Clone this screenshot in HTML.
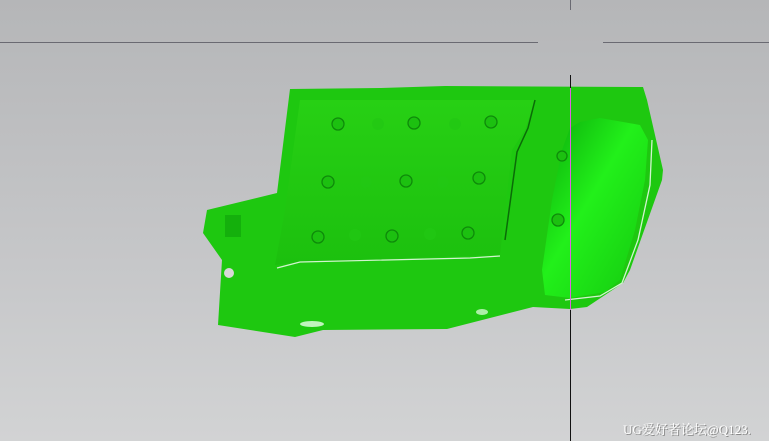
<!DOCTYPE html>
<html><head><meta charset="utf-8"><style>
html,body{margin:0;padding:0}
body{width:769px;height:441px;overflow:hidden;background:linear-gradient(#b5b6b8,#c6c7c9 60%,#d2d3d4);position:relative;font-family:"Liberation Serif","Noto Serif CJK SC",serif}
.t{position:absolute;left:623px;top:419px;font-size:13px;color:#fff;text-shadow:1px 1px 0 #888;white-space:nowrap}
</style></head><body>
<svg width="769" height="441" style="position:absolute;left:0;top:0">
<defs>
<linearGradient id="pk" x1="0" y1="0" x2="1" y2="1">
<stop offset="0" stop-color="#0aa80a"/><stop offset="0.45" stop-color="#22f01a"/><stop offset="1" stop-color="#14c80f"/>
</linearGradient>
<linearGradient id="pl" x1="0" y1="0" x2="0" y2="1">
<stop offset="0" stop-color="#27d014"/><stop offset="1" stop-color="#1cc00e"/>
</linearGradient>
</defs>
<line x1="0" y1="42.5" x2="538" y2="42.5" stroke="#6a6a72" stroke-width="1"/>
<line x1="603" y1="42.5" x2="769" y2="42.5" stroke="#6a6a72" stroke-width="1"/>
<line x1="570.5" y1="0" x2="570.5" y2="10" stroke="#6a6a72"/>
<polygon fill="#1ec810" points="290,89 380,88 445,86 643,87 647,100 663,170 662,180 630,270 623,283 587,307 570,309 533,307 447,329 323,330 295,337 218,325 222,260 203,233 207,210 277,193"/>
<polygon fill="url(#pl)" points="300,100 535,100 525,130 512,150 500,255 300,262 275,265 285,210"/>
<polyline fill="none" stroke="#fff" stroke-width="1.2" opacity=".8" points="277,268 300,262 470,258 500,256"/>
<polyline fill="none" stroke="#0b6b08" stroke-width="1.5" points="535,100 528,128 517,152 505,240"/>
<polygon fill="url(#pk)" points="570,128 580,122 600,118 640,125 648,140 645,180 635,230 620,280 605,292 570,298 545,295 542,270 552,200 562,150"/>
<polyline fill="none" stroke="#fff" stroke-width="1.3" opacity=".8" points="652,140 650,185 638,240 622,283 600,296 565,300"/>
<g fill="#1cc010" stroke="#0e8a0a" stroke-width="1.3">
<circle cx="338" cy="124" r="6"/><circle cx="414" cy="123" r="6"/><circle cx="491" cy="122" r="6"/>
<circle cx="328" cy="182" r="6"/><circle cx="406" cy="181" r="6"/><circle cx="479" cy="178" r="6"/>
<circle cx="318" cy="237" r="6"/><circle cx="392" cy="236" r="6"/><circle cx="468" cy="233" r="6"/>
<circle cx="562" cy="156" r="5"/><circle cx="558" cy="220" r="6"/>
</g>
<g fill="#22c814" opacity=".7">
<circle cx="378" cy="124" r="6"/><circle cx="455" cy="124" r="6"/>
<circle cx="366" cy="182" r="6"/><circle cx="443" cy="182" r="6"/>
<circle cx="355" cy="235" r="6"/><circle cx="430" cy="234" r="6"/>
</g>
<circle cx="229" cy="273" r="5" fill="#d8d8d8"/>
<rect x="225" y="215" width="16" height="22" fill="#14b00c"/>
<ellipse cx="312" cy="324" rx="12" ry="3" fill="#e8ffe8" opacity=".8"/>
<ellipse cx="482" cy="312" rx="6" ry="3" fill="#e8ffe8" opacity=".7"/>
<line x1="570.5" y1="75" x2="570.5" y2="441" stroke="#111" stroke-width="1"/>
<line x1="570.5" y1="88" x2="570.5" y2="310" stroke="#e060e0" stroke-width="1"/>
</svg>
<div class="t">UG爱好者论坛@Q123.</div>
</body></html>
